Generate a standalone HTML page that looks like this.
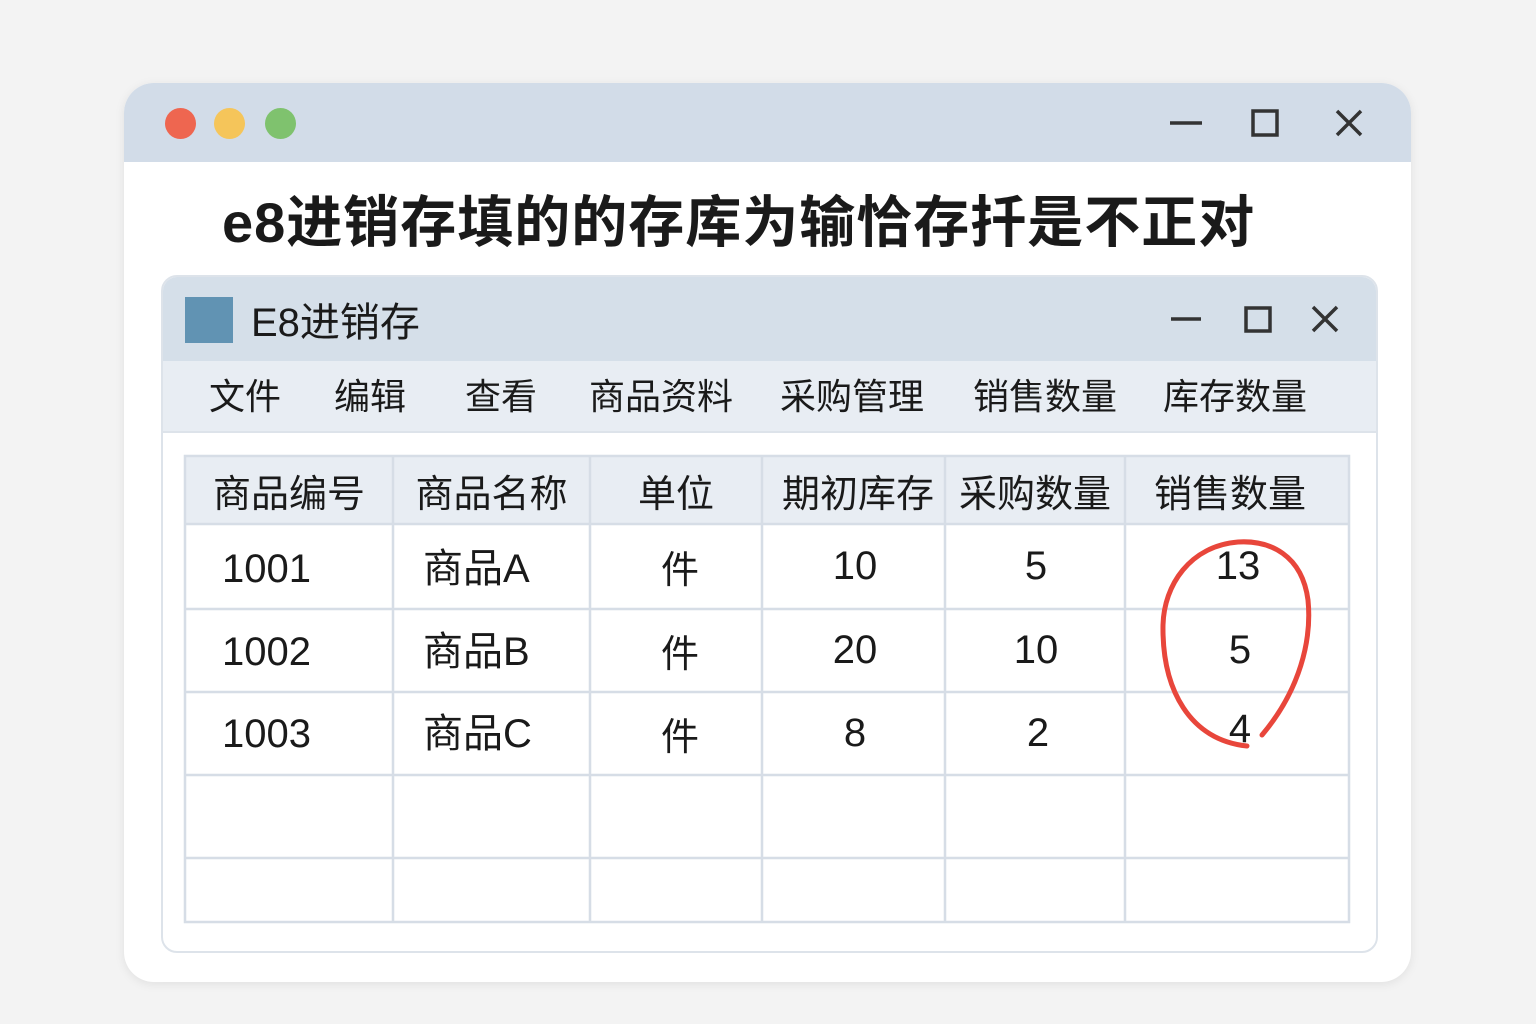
<!DOCTYPE html><html><head><meta charset="utf-8"><style>
body{margin:0;width:1536px;height:1024px;background:#f3f3f3;position:relative;overflow:hidden;font-family:"Liberation Sans","Noto Sans CJK SC",sans-serif;color:#1a1a1a}
.a{position:absolute}
.win{left:124px;top:83px;width:1287px;height:899px;background:#fff;border-radius:30px;box-shadow:0 2px 10px rgba(0,0,0,.08);overflow:hidden}
.tb{left:0;top:0;width:100%;height:79px;background:#d2dce8}
.dot{width:31px;height:31px;border-radius:50%;top:25px}
.t{white-space:nowrap}
.inner{left:161px;top:275px;width:1213px;height:674px;border:2px solid #dde3ea;border-radius:16px;background:#fff;overflow:hidden}
.cell{position:absolute;display:flex;align-items:center;justify-content:center;font-size:38px}
</style></head><body>
<div class="a win">
<div class="a tb"></div>
<div class="a dot" style="left:41px;background:#ee6650"></div>
<div class="a dot" style="left:90px;background:#f5c55a"></div>
<div class="a dot" style="left:141px;background:#7fc26e"></div>
<svg class="a" style="left:1040px;top:20px" width="200" height="40" stroke="#333" stroke-width="3.5" fill="none"><line x1="6" y1="20" x2="38" y2="20"/><rect x="89" y="8" width="24" height="24"/><path d="M173 8 L197 32 M197 8 L173 32"/></svg>
</div>
<div class="a t" style="left:222px;top:188px;font-size:56px;font-weight:bold;letter-spacing:1px;line-height:70px">e8进销存填的的存库为输恰存扦是不正对</div>
<div class="a inner">
<div class="a" style="left:0;top:0;width:100%;height:84px;background:#d5dfe9"></div>
<div class="a" style="left:0;top:84px;width:100%;height:70px;background:#e8edf3;border-bottom:2px solid #dde3ea"></div>
<div class="a" style="left:22px;top:20px;width:48px;height:46px;background:#6193b3"></div>
<div class="a t" style="left:88px;top:22px;font-size:40px;line-height:48px">E8进销存</div>
<svg class="a" style="left:1000px;top:24px" width="180" height="40" stroke="#333" stroke-width="3.5" fill="none"><line x1="8" y1="18" x2="38" y2="18"/><rect x="83" y="7" width="24" height="23"/><path d="M150 6 L174 30 M174 6 L150 30"/></svg>
<div class="a t" style="left:46px;top:96px;font-size:36px;line-height:48px;word-spacing:0">
<span class="a" style="left:0">文件</span><span class="a" style="left:125px">编辑</span><span class="a" style="left:256px">查看</span><span class="a" style="left:380px">商品资料</span><span class="a" style="left:571px">采购管理</span><span class="a" style="left:764px">销售数量</span><span class="a" style="left:954px">库存数量</span></div>
</div>
<svg class="a" style="left:0;top:0" width="1536" height="1024">
<rect x="185" y="456" width="1164" height="68" fill="#e8edf3"/>
<g stroke="#d6dde6" stroke-width="2.5" fill="none">
<rect x="185" y="456" width="1164" height="466"/>
<line x1="185" y1="524" x2="1349" y2="524"/><line x1="185" y1="609" x2="1349" y2="609"/><line x1="185" y1="692" x2="1349" y2="692"/><line x1="185" y1="775" x2="1349" y2="775"/><line x1="185" y1="858" x2="1349" y2="858"/>
<line x1="393" y1="456" x2="393" y2="922"/><line x1="590" y1="456" x2="590" y2="922"/><line x1="762" y1="456" x2="762" y2="922"/><line x1="945" y1="456" x2="945" y2="922"/><line x1="1125" y1="456" x2="1125" y2="922"/>
</g></svg>
<div class="cell" style="left:185px;top:456px;width:208px;height:68px">商品编号</div>
<div class="cell" style="left:393px;top:456px;width:197px;height:68px">商品名称</div>
<div class="cell" style="left:590px;top:456px;width:172px;height:68px">单位</div>
<div class="cell" style="left:762px;top:456px;width:183px;height:68px;justify-content:flex-start;padding-left:20px;box-sizing:border-box">期初库存</div>
<div class="cell" style="left:945px;top:456px;width:180px;height:68px">采购数量</div>
<div class="cell" style="left:1125px;top:456px;width:210px;height:68px">销售数量</div>

<div class="a t" style="left:222px;top:545px;font-size:40px;line-height:48px">1001</div>
<div class="a t" style="left:222px;top:628px;font-size:40px;line-height:48px">1002</div>
<div class="a t" style="left:222px;top:710px;font-size:40px;line-height:48px">1003</div>
<div class="a t" style="left:423px;top:545px;font-size:40px;line-height:48px">商品A</div>
<div class="a t" style="left:423px;top:628px;font-size:40px;line-height:48px">商品B</div>
<div class="a t" style="left:423px;top:710px;font-size:40px;line-height:48px">商品C</div>
<div class="cell" style="left:590px;top:524px;width:180px;height:85px">件</div>
<div class="cell" style="left:590px;top:609px;width:180px;height:83px">件</div>
<div class="cell" style="left:590px;top:692px;width:180px;height:83px">件</div>
<div class="cell" style="left:762px;top:524px;width:186px;height:85px;font-size:40px">10</div>
<div class="cell" style="left:762px;top:609px;width:186px;height:83px;font-size:40px">20</div>
<div class="cell" style="left:762px;top:692px;width:186px;height:83px;font-size:40px">8</div>
<div class="cell" style="left:945px;top:524px;width:182px;height:85px;font-size:40px">5</div>
<div class="cell" style="left:945px;top:609px;width:182px;height:83px;font-size:40px">10</div>
<div class="cell" style="left:945px;top:692px;width:186px;height:83px;font-size:40px">2</div>
<div class="cell" style="left:1125px;top:524px;width:226px;height:85px;font-size:40px">13</div>
<div class="cell" style="left:1125px;top:609px;width:230px;height:83px;font-size:40px">5</div>
<div class="cell" style="left:1125px;top:688px;width:230px;height:83px;font-size:40px">4</div>
<svg class="a" style="left:0;top:0" width="1536" height="1024"><path d="M1262 735 C1300 690 1312 640 1308 600 C1302 555 1270 540 1238 542 C1190 546 1164 585 1163 625 C1162 690 1190 740 1247 746" stroke="#e8463b" stroke-width="5" fill="none" stroke-linecap="round"/></svg>
</body></html>
